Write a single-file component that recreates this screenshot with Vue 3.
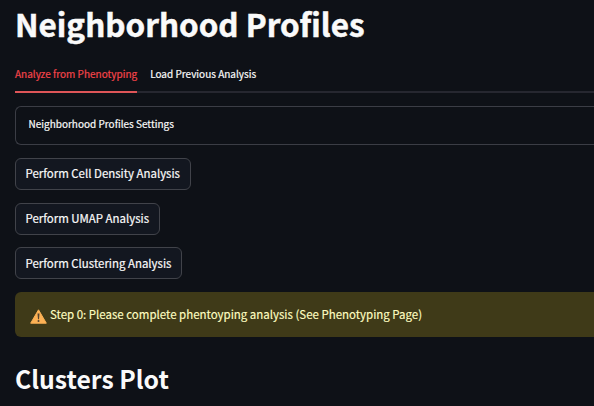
<script setup>
const tabs = [
  { label: 'Analyze from Phenotyping', active: true },
  { label: 'Load Previous Analysis', active: false },
]
const actions = [
  { label: 'Perform Cell Density Analysis', kind: 'density' },
  { label: 'Perform UMAP Analysis', kind: 'umap' },
  { label: 'Perform Clustering Analysis', kind: 'clustering' },
]
</script>

<template>
  <main class="page">
    <h1 class="title">Neighborhood Profiles</h1>
    <nav class="tabs">
      <button v-for="t in tabs" :key="t.label" class="tab" :class="{ active: t.active }">{{ t.label }}</button>
    </nav>
    <section class="expander">Neighborhood Profiles Settings</section>
    <div class="actions">
      <button v-for="a in actions" :key="a.kind" class="action" :class="a.kind">{{ a.label }}</button>
    </div>
    <div class="alert">
      <svg class="warn" viewBox="0 0 17 15" width="17" height="15">
        <path d="M8.5 .8 16.3 14.2H.7z" fill="#fcb155" stroke="#fcb155" stroke-width="1" stroke-linejoin="round" />
        <path d="M7.5 4.6h2L9 10.2H8z" fill="#56432e" />
        <circle cx="8.5" cy="12" r="1" fill="#56432e" />
      </svg>
      <span class="message">Step 0: Please complete phentoyping analysis (See Phenotyping Page)</span>
    </div>
    <h2 class="subtitle">Clusters Plot</h2>
  </main>
</template>

<style>
body {
  background: #0e1117;
  overflow: hidden;
}
</style>

<style scoped>
.page {
  box-sizing: border-box;
  width: 100%;
  height: 406px;
  padding-left: 15px;
  overflow: hidden;
  background: #0e1117;
  color: #fafafa;
  font-family: "Noto Sans CJK SC", "Noto Sans", sans-serif;
  white-space: nowrap;
}
button {
  margin: 0;
  font-family: inherit;
  color: inherit;
  white-space: nowrap;
}
.title {
  box-sizing: border-box;
  margin: 0;
  padding-top: 1px;
  height: 56px;
  font-size: 31.45px;
  line-height: 46px;
  font-weight: 700;
  -webkit-text-stroke: 0.5px currentColor;
}
.tabs {
  display: flex;
  gap: 13px;
  height: 37px;
  box-sizing: border-box;
  box-shadow: inset 0 -2px #262730;
}
.tab {
  padding: 0;
  border: 0;
  border-bottom: 2px solid transparent;
  background: none;
  font-size: 10px;
  line-height: 35px;
  font-weight: 400;
  -webkit-text-stroke: 0.2px currentColor;
}
.tab.active {
  color: #f5444a;
  border-bottom-color: #df5558;
}
.expander {
  box-sizing: border-box;
  height: 39px;
  margin-top: 13px;
  padding-left: 12.5px;
  border: 1px solid #3b3d45;
  border-right: 0;
  border-radius: 6px 0 0 6px;
  font-size: 10px;
  line-height: 34px;
  font-weight: 400;
  -webkit-text-stroke: 0.2px currentColor;
}
.actions {
  display: flex;
  flex-direction: column;
  align-items: flex-start;
  margin-top: 13px;
}
.action {
  box-sizing: border-box;
  height: 32px;
  padding: 0 9.5px 2px;
  border: 1px solid #41434a;
  border-radius: 6px;
  background: #131720;
  font-size: 11.45px;
  line-height: 28px;
  text-align: left;
  -webkit-text-stroke: 0.2px currentColor;
}
.density { width: 176px; margin-bottom: 13px; }
.umap { width: 145px; margin-bottom: 12px; }
.clustering { width: 167px; padding-bottom: 0; line-height: 30px; }
.alert {
  display: flex;
  align-items: center;
  box-sizing: border-box;
  height: 45px;
  margin-top: 13px;
  padding-left: 15px;
  gap: 3px;
  border-radius: 6px 0 0 6px;
  background: #3f3a18;
  color: #ffffc2;
  font-size: 11.47px;
  -webkit-text-stroke: 0.15px currentColor;
}
.warn {
  margin-top: 3px;
}
.message {
  margin-bottom: 2px;
}
.subtitle {
  margin: 21px 0 0;
  font-size: 24.75px;
  line-height: 40px;
  font-weight: 600;
}
</style>
